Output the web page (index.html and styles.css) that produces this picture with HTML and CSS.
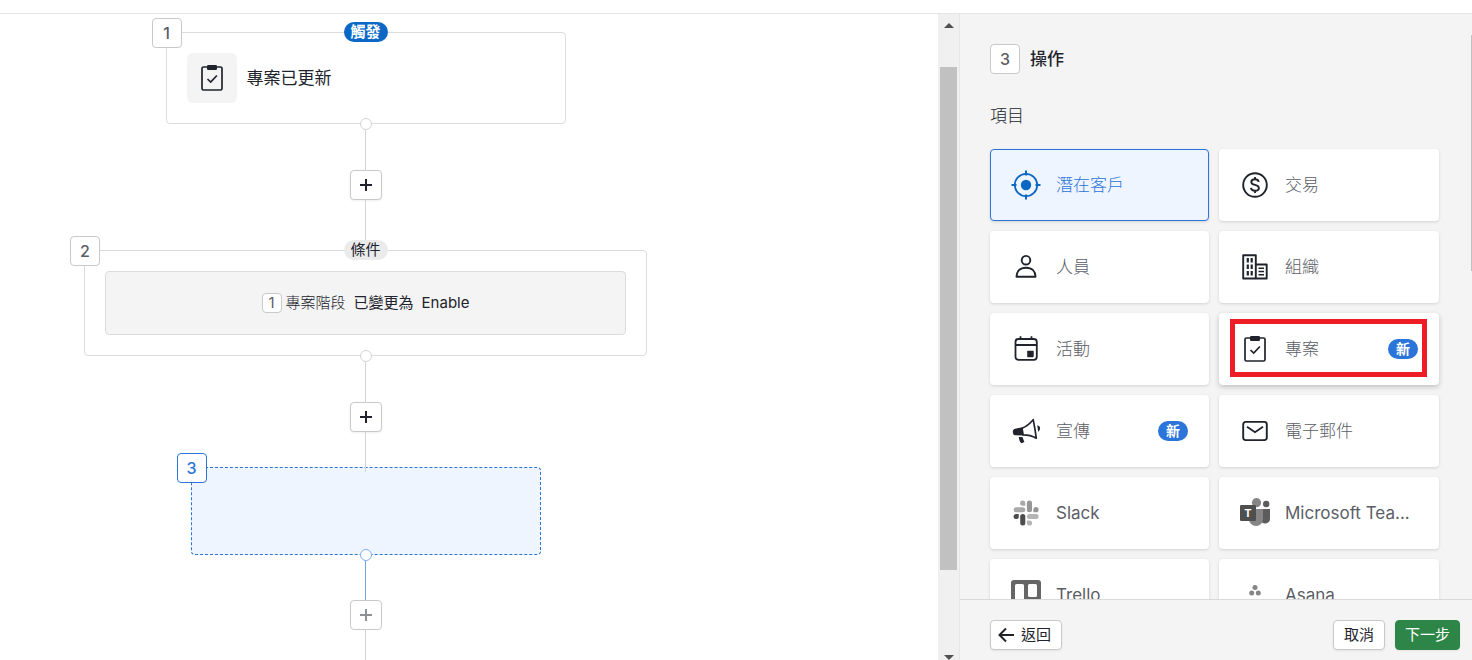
FILE: index.html
```html
<!DOCTYPE html>
<html lang="zh-Hant">
<head>
    <meta charset="UTF-8">
    <meta name="viewport" content="width=device-width, initial-scale=1.0">
    <title>自動化</title>
    <link rel="stylesheet" href="styles.css">
</head>
<body>
    <svg class="sprite" aria-hidden="true">
        <symbol id="icon-project" viewBox="0 0 32 32">
            <rect x="6" y="5" width="20" height="23" rx="1.5" fill="none" stroke="currentColor" stroke-width="1.7"/>
            <rect x="11" y="3" width="10" height="5" rx="1.2" fill="currentColor"/>
            <path d="M11.5 17l3.2 3 6.200-6.5" fill="none" stroke="currentColor" stroke-width="1.7"/>
        </symbol>
        <symbol id="icon-plus" viewBox="0 0 14 14">
            <path d="M7 1v12M1 7h12" stroke="currentColor" stroke-width="2"/>
        </symbol>
    </svg>

    <header class="topbar"></header>

    <div class="layout">
        <main class="canvas">
            <div class="flow">
                <section class="step step-trigger">
                    <span class="step-number">1</span>
                    <span class="pill pill-trigger">觸發</span>
                    <span class="step-icon"><svg class="icon"><use href="#icon-project"/></svg></span>
                    <h2 class="step-title">專案已更新</h2>
                    <span class="port"></span>
                </section>
                <div class="line"></div>
                <button class="add-btn" aria-label="新增步驟"><svg><use href="#icon-plus"/></svg></button>
                <div class="line line-long"></div>

                <section class="step step-condition">
                    <span class="step-number">2</span>
                    <span class="pill">條件</span>
                    <div class="condition">
                        <span class="condition-number">1</span>
                        <span class="condition-field">專案階段</span>
                        <span>已變更為</span>
                        <span>Enable</span>
                    </div>
                    <span class="port"></span>
                </section>
                <div class="line"></div>
                <button class="add-btn" aria-label="新增步驟"><svg><use href="#icon-plus"/></svg></button>
                <div class="line line-into"></div>

                <section class="step step-empty">
                    <span class="step-number">3</span>
                    <span class="port"></span>
                </section>
                <div class="line line-active"></div>
                <button class="add-btn" aria-label="新增步驟" disabled><svg><use href="#icon-plus"/></svg></button>
                <div class="line"></div>
            </div>
        </main>

        <div class="scrollbar">
            <span class="arrow arrow-up"></span>
            <span class="thumb"></span>
            <span class="arrow arrow-down"></span>
        </div>

        <aside class="panel">
            <div class="panel-body">
                <div class="panel-header">
                    <span class="step-number">3</span>
                    <h1 class="panel-title">操作</h1>
                </div>
                <h2 class="section-title">項目</h2>

                <div class="items">
                    <button class="item selected">
                        <svg class="icon" viewBox="0 0 32 32">
                            <circle cx="16" cy="16" r="11.2" fill="none" stroke="currentColor" stroke-width="1.8"/>
                            <circle cx="16" cy="16" r="5.2" fill="currentColor"/>
                            <path d="M16 1.5v5M16 25.5v5M1.5 16h5M25.5 16h5" stroke="currentColor" stroke-width="2"/>
                        </svg>
                        <span class="item-label">潛在客戶</span>
                    </button>
                    <button class="item">
                        <svg class="icon" viewBox="0 0 32 32" fill="none" stroke="currentColor" stroke-width="1.9">
                            <circle cx="16" cy="16" r="11.8"/>
                            <path d="M19.7 12.8c-.3-1.7-1.7-2.6-3.7-2.6-2.2 0-3.7 1-3.7 2.7 0 4.2 7.6 1.8 7.6 6.1 0 1.8-1.7 2.8-3.9 2.8-2.3 0-3.8-1-4.1-2.9M16 8v2.5M16 21.5V24"/>
                        </svg>
                        <span class="item-label">交易</span>
                    </button>
                    <button class="item">
                        <svg class="icon" viewBox="0 0 32 32" fill="none" stroke="currentColor" stroke-width="1.9" stroke-linejoin="round">
                            <circle cx="16" cy="9.2" r="4.3"/>
                            <path d="M6.500 25.7c0-5.300 3.500-9 9.500-9s9.500 3.700 9.500 9z"/>
                        </svg>
                        <span class="item-label">人員</span>
                    </button>
                    <button class="item">
                        <svg class="icon" viewBox="0 0 32 32" fill="none" stroke="currentColor" stroke-width="1.9" stroke-linejoin="round">
                            <path d="M4.2 4.2h12.6v23.3H4.200zM16.8 13.500h10.900v14H16.800"/>
                            <path d="M8.800 7v4.500M12.700 7v4.500M8.800 13.500V18M12.700 13.500V18M8.800 20v4.500M12.700 20v4.500" stroke-width="2.2"/>
                            <path d="M19.500 17.200H25M19.500 20.500H25M19.500 23.800H25" stroke-width="1.600"/>
                        </svg>
                        <span class="item-label">組織</span>
                    </button>
                    <button class="item">
                        <svg class="icon" viewBox="0 0 32 32">
                            <rect x="5.500" y="6" width="21.300" height="20.800" rx="3" fill="none" stroke="currentColor" stroke-width="1.800"/>
                            <path d="M5.500 12h21.300M10.500 3.300v3M21.500 3.300v3" stroke="currentColor" stroke-width="1.800"/>
                            <rect x="17.200" y="17.800" width="6.500" height="6.500" rx=".8" fill="currentColor"/>
                        </svg>
                        <span class="item-label">活動</span>
                    </button>
                    <button class="item raised">
                        <svg class="icon"><use href="#icon-project"/></svg>
                        <span class="item-label">專案</span>
                        <span class="new-badge">新</span>
                        <span class="highlight"></span>
                    </button>
                    <button class="item">
                        <svg class="icon" viewBox="0 0 32 32">
                            <path d="M12 13.200C16 11.700 20 8.500 23.200 4.700c1.200 5.800 2.200 12 3.100 18.500-4-2.300-9-3.300-13.300-3.300z" fill="none" stroke="currentColor" stroke-width="1.700" stroke-linejoin="round"/>
                            <path d="M12.700 12.300L5 13.700c-2.300.5-2.500 3-1.900 4.700.5 1.500 1.400 2 2.900 1.900l7.400.300z" fill="currentColor"/>
                            <path d="M8.800 21.900l3.600.200 2 5-3 1.200c-1.500-1.500-2.400-3.700-2.600-6.400zM27.300 10.300c3.500.6 3.700 4.800.800 6.500z" fill="currentColor"/>
                        </svg>
                        <span class="item-label">宣傳</span>
                        <span class="new-badge">新</span>
                    </button>
                    <button class="item">
                        <svg class="icon" viewBox="0 0 32 32" fill="none" stroke="currentColor" stroke-width="1.900">
                            <rect x="4.200" y="6.900" width="23.600" height="18.200" rx="2.500"/>
                            <path d="M8 11.800l8 5.400 8-5.400"/>
                        </svg>
                        <span class="item-label">電子郵件</span>
                    </button>
                    <button class="item">
                        <svg class="icon" viewBox="0 0 32 32" fill="#a9a9a9">
                            <path d="M15.300 8.700h-2.600a2.600 2.600 0 1 1 2.600-2.600z"/>
                            <rect x="3.700" y="10.200" width="11.600" height="5.100" rx="2.500"/>
                            <rect x="16.900" y="3.600" width="5.100" height="11.700" rx="2.500" fill="#979797"/>
                            <path d="M23.400 15.300v-2.600a2.600 2.600 0 1 1 2.600 2.600z" fill="#979797"/>
                            <path d="M8.800 16.900v2.600a2.600 2.600 0 1 1-2.600-2.600z" fill="#4d4d4d"/>
                            <rect x="10.200" y="16.900" width="5.100" height="11.600" rx="2.500" fill="#4d4d4d"/>
                            <rect x="16.900" y="16.900" width="11.700" height="5.100" rx="2.500" fill="#b5b5b5"/>
                            <path d="M16.900 23.400h2.600a2.600 2.600 0 1 1-2.600 2.600z" fill="#b5b5b5"/>
                        </svg>
                        <span class="item-label latin">Slack</span>
                    </button>
                    <button class="item">
                        <svg class="icon" viewBox="0 0 32 32">
                            <circle cx="27.200" cy="7" r="3.200" fill="#5c5c5c"/>
                            <path d="M22 12h9v9.500a4.800 4.800 0 0 1-9 2.500z" fill="#5c5c5c"/>
                            <circle cx="17.500" cy="5.700" r="4.600" fill="#858585"/>
                            <path d="M10 12h14v10a7 7 0 0 1-14 0z" fill="#858585"/>
                            <rect x="1" y="8" width="16" height="16" rx="1.200" fill="#4f4f4f"/>
                            <text class="teams-letter" x="9" y="20" text-anchor="middle">T</text>
                        </svg>
                        <span class="item-label latin">Microsoft Tea...</span>
                    </button>
                    <button class="item">
                        <svg class="icon" viewBox="0 0 32 32">
                            <path fill-rule="evenodd" fill="#666" d="M4 1h24a3 3 0 0 1 3 3v24a3 3 0 0 1-3 3H4a3 3 0 0 1-3-3V4a3 3 0 0 1 3-3zM6.500 5A1.500 1.500 0 0 0 5 6.500v18A1.500 1.500 0 0 0 6.500 26h6a1.500 1.500 0 0 0 1.500-1.500v-18A1.500 1.500 0 0 0 12.500 5zM19.500 5A1.500 1.500 0 0 0 18 6.500v10a1.500 1.500 0 0 0 1.500 1.500h6a1.500 1.500 0 0 0 1.500-1.500v-10A1.500 1.500 0 0 0 25.500 5z"/>
                        </svg>
                        <span class="item-label latin">Trello</span>
                    </button>
                    <button class="item">
                        <svg class="icon" viewBox="0 0 32 32" fill="#858585">
                            <circle cx="16" cy="8.500" r="2.500"/>
                            <circle cx="12.700" cy="14" r="2.500"/>
                            <circle cx="19.300" cy="14" r="2.500"/>
                        </svg>
                        <span class="item-label latin">Asana</span>
                    </button>
                </div>
                <span class="panel-track"></span>
            </div>

            <footer class="panel-footer">
                <button class="btn btn-back">
                    <svg viewBox="0 0 16 16"><path d="M8 1.500L1.500 8 8 14.500M1.500 8H16" fill="none" stroke="currentColor" stroke-width="2"/></svg>
                    返回
                </button>
                <button class="btn">取消</button>
                <button class="btn btn-next">下一步</button>
            </footer>
        </aside>
    </div>
</body>
</html>
```
FILE: styles.css
```css
* {
    margin: 0;
    padding: 0;
    box-sizing: border-box;
}

body {
    display: flex;
    flex-direction: column;
    height: 100vh;
    overflow: hidden;
    font-family: Inter, "Noto Sans CJK TC", sans-serif;
    font-size: 15px;
    line-height: 20px;
    color: #21232c;
    background: #fff;
}

button {
    font: inherit;
    color: inherit;
    cursor: pointer;
}

.sprite {
    display: none;
}

.topbar {
    flex: 0 0 14px;
    border-bottom: 1px solid #e6e6e6;
}

.layout {
    display: flex;
    flex: 1;
    min-height: 0;
}

/* Canvas */
.canvas {
    flex: 1;
    min-width: 0;
    overflow: hidden;
}

.flow {
    display: flex;
    flex-direction: column;
    align-items: center;
    max-width: 731px;
    padding-top: 18px;
}

.step {
    position: relative;
    flex-shrink: 0;
    border: 1px solid #dcdcdd;
    border-radius: 4px;
}

.step-trigger {
    display: flex;
    align-items: center;
    gap: 10px;
    width: 400px;
    height: 92px;
    padding: 0 20px;
}

.step-condition {
    width: 563px;
    padding: 20px;
}

.step-empty {
    width: 350px;
    height: 88px;
    border: 1px dashed #2a74da;
    background: #eff5ff;
}

.step-number {
    display: flex;
    align-items: center;
    justify-content: center;
    width: 30px;
    height: 30px;
    border: 1px solid #c8c9cb;
    border-radius: 4px;
    background: #fff;
    color: #5b5d66;
    font-size: 16px;
    font-weight: 500;
}

.step > .step-number {
    position: absolute;
    top: -15px;
    left: -15px;
}

.step-empty > .step-number {
    border-color: #2a74da;
    color: #2a74da;
}

.pill {
    position: absolute;
    top: -11px;
    left: 50%;
    transform: translateX(-50%);
    padding: 0 7px;
    border-radius: 10px;
    background: #ebebec;
    white-space: nowrap;
}

.pill-trigger {
    background: #0d68c5;
    color: #fff;
    font-weight: 600;
}

.step-icon {
    display: flex;
    align-items: center;
    justify-content: center;
    width: 50px;
    height: 50px;
    border-radius: 6px;
    background: #f4f4f4;
}

.step-title {
    font-size: 17px;
    font-weight: 400;
}

.icon {
    flex: none;
    width: 32px;
    height: 32px;
}

.port {
    position: absolute;
    bottom: -7px;
    left: 50%;
    width: 12px;
    height: 12px;
    margin-left: -6px;
    border: 1px solid #d3d4d5;
    border-radius: 50%;
    background: #fff;
}

.step-empty .port {
    border-color: #7fb0f7;
}

.condition {
    display: flex;
    align-items: center;
    justify-content: center;
    gap: 8px;
    height: 64px;
    border: 1px solid #dcdcdd;
    border-radius: 4px;
    background: #f4f4f4;
}

.condition-number {
    width: 20px;
    margin-right: -4px;
    border: 1px solid #c8c9cb;
    border-radius: 4px;
    background: #fff;
    color: #5b5d66;
    line-height: 18px;
    text-align: center;
}

.condition-field {
    font-weight: 300;
}

.line {
    flex: none;
    width: 1px;
    height: 46px;
    background: #d3d4d5;
}

.line-long {
    height: 50px;
}

/* runs a little way into the empty step */
.line-into {
    z-index: 1;
    height: 40px;
    margin-bottom: -5px;
}

.line-active {
    height: 45px;
    background: #6fa5f0;
}

.add-btn {
    display: flex;
    flex: none;
    align-items: center;
    justify-content: center;
    width: 32px;
    height: 30px;
    border: 1px solid #c8c9cb;
    border-radius: 4px;
    background: #fff;
    box-shadow: 0 1px 2px rgba(33, 35, 44, 0.08);
}

.add-btn svg {
    width: 14px;
    height: 14px;
}

.add-btn:disabled {
    color: #8f9096;
    box-shadow: none;
}

/* Canvas scrollbar */
.scrollbar {
    display: flex;
    flex: 0 0 21px;
    flex-direction: column;
    align-items: center;
    justify-content: space-between;
    overflow: hidden;
    padding-top: 9px;
    background: #f0f0f0;
}

.arrow {
    border: 5px solid transparent;
}

.arrow-up {
    border-top: 0;
    border-bottom-color: #505050;
}

.arrow-down {
    border-bottom: 0;
    border-top-color: #505050;
}

.thumb {
    width: 17px;
    height: 79%;
    margin-bottom: 46px;
    background: #c1c1c1;
}

/* Side panel */
.panel {
    display: flex;
    flex: 0 0 513px;
    flex-direction: column;
    border-left: 1px solid #e6e6e6;
    background: #f4f4f4;
}

.panel-body {
    position: relative;
    flex: 1;
    min-height: 0;
    overflow: hidden;
    padding: 30px 33px 0 30px;
}

.panel-header {
    display: flex;
    align-items: center;
    gap: 10px;
}

.panel-title {
    font-size: 17px;
    font-weight: 500;
}

.section-title {
    margin: 32px 0 23px;
    font-size: 17px;
    font-weight: 300;
}

.items {
    display: grid;
    grid-template-columns: 219fr 220fr;
    gap: 10px;
}

.item {
    position: relative;
    display: flex;
    align-items: center;
    gap: 14px;
    min-width: 0;
    height: 72px;
    padding: 0 20px 0 19px;
    border: 1px solid transparent;
    border-radius: 4px;
    background: #fff;
    box-shadow: 0 1px 3px rgba(33, 35, 44, 0.16);
    text-align: left;
}

.item.selected {
    border-color: #2a74da;
    background: #eff5ff;
    color: #0d68c5;
}

.item.raised {
    box-shadow: 0 2px 5px rgba(33, 35, 44, 0.24);
}

.item-label {
    flex: 1;
    color: #5b5d66;
    font-size: 17px;
    font-weight: 300;
    white-space: nowrap;
}

.item-label.latin {
    font-weight: 400;
}

.selected .item-label {
    color: #2a74da;
}

.new-badge {
    padding: 0 8px;
    border-radius: 10px;
    background: #2a74da;
    color: #fff;
    font-size: 14px;
    font-weight: 600;
}

.highlight {
    position: absolute;
    inset: 5px 11px 7px 10px;
    border: 5px solid #ee1c25;
}

.teams-letter {
    fill: #fff;
    font-size: 11px;
    font-weight: 700;
}

.panel-track {
    position: absolute;
    top: 21px;
    right: 0;
    width: 1px;
    height: 236px;
    background: #c1c1c1;
}

.panel-footer {
    display: flex;
    gap: 10px;
    padding: 20px 12px 10px 30px;
    border-top: 1px solid #d9d9da;
}

.btn {
    display: flex;
    align-items: center;
    gap: 7px;
    height: 30px;
    padding: 0 10px;
    border: 1px solid #c8c9cb;
    border-radius: 4px;
    background: #fff;
    box-shadow: 0 1px 2px rgba(33, 35, 44, 0.08);
}

.btn svg {
    width: 16px;
    height: 16px;
}

.btn-back {
    margin-right: auto;
    padding: 0 10px 0 7px;
}

.btn-next {
    padding: 0 9px;
    border-color: #2d8647;
    background: #2d8647;
    color: #fff;
}
```
